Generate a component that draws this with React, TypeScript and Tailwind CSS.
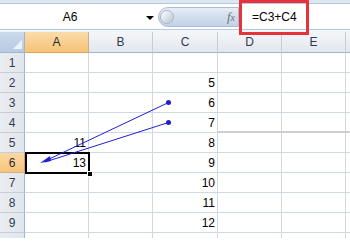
import React from "react";

const cols = ["A", "B", "C", "D", "E", ""];
const colW = [64, 64, 65, 64, 64, 64];
const aVals: Record<number, string> = { 5: "11", 6: "13" };
const cVals: Record<number, string> = { 2: "5", 3: "6", 4: "7", 5: "8", 6: "9", 7: "10", 8: "11", 9: "12" };

function HeaderCell({ label, w, sel }: { label: string; w: number; sel?: boolean }) {
  return (
    <div
      style={{ width: w }}
      className={
        "shrink-0 h-full flex items-center justify-center border-r border-b text-[12px] " +
        (sel
          ? "bg-gradient-to-b from-[#fbdcaa] to-[#f7c275] border-r-[#c7b08a] border-b-[#d9a35a] text-[#2b2b2b]"
          : "bg-gradient-to-b from-[#f4f6f9] to-[#e2e7ee] border-r-[#c5cdd8] border-b-[#9eb6ce] text-[#2f3b4c]")
      }
    >
      {label}
    </div>
  );
}

export default function App() {
  const rows = [1, 2, 3, 4, 5, 6, 7, 8, 9];
  return (
    <div className="relative w-[350px] h-[243px] bg-white overflow-hidden font-['Liberation_Sans',Arial,sans-serif]">
      {/* top strip */}
      <div className="h-[4px] bg-[#dde7f3] border-b border-[#b4c7dd]" />
      {/* formula bar */}
      <div className="h-[25px] flex bg-white">
        <div className="w-[158px] shrink-0 flex items-center relative">
          <div className="w-[140px] text-center text-[12px] text-black">A6</div>
          <div className="absolute left-[146px] top-[12px] w-0 h-0 border-l-[4px] border-r-[4px] border-t-[4px] border-l-transparent border-r-transparent border-t-black" />
        </div>
        <div className="w-[81px] shrink-0 flex items-center">
          <div className="relative w-full h-[20px] rounded-l-full bg-gradient-to-b from-[#e6eef8] via-[#d2deec] to-[#c3d3e6] border border-[#a8bcd4] flex items-center justify-end pr-[3px]">
            <div className="absolute left-[1px] top-[2px] w-[14px] h-[14px] rounded-full bg-gradient-to-br from-white to-[#b9c6d4] border border-[#a8b6c6]" />
            <span className="font-['Liberation_Serif',serif] italic text-[13px] text-[#6d7480]">
              f<span className="text-[10px]">x</span>
            </span>
          </div>
        </div>
        <div className="flex-1 flex items-center pl-[13px] text-[12px] text-black">=C3+C4</div>
      </div>
      <div className="h-[1px] bg-[#b6c8dd]" />
      <div className="h-[2px] bg-[#f2f5f9]" />
      {/* column header */}
      <div className="h-[21px] flex">
        <div className="w-[25px] shrink-0 h-full relative bg-gradient-to-b from-[#cbdaec] to-[#b7cbe3] border-r border-b border-[#9eb6ce]">
          <div
            className="absolute right-[2px] bottom-[3px] w-0 h-0 border-l-transparent border-b-[#eef3f9]"
            style={{ borderLeftWidth: 9, borderBottomWidth: 9, borderTopWidth: 0, borderRightWidth: 0 }}
          />
        </div>
        {cols.map((c, i) => (
          <HeaderCell key={i} label={c} w={colW[i]} sel={i === 0} />
        ))}
      </div>
      {/* rows */}
      {rows.map((r) => (
        <div key={r} className="h-[20px] flex">
          <div
            className={
              "w-[25px] shrink-0 h-full flex items-center justify-center border-r border-b text-[12px] " +
              (r === 6
                ? "bg-gradient-to-b from-[#fbd9a4] to-[#f7c47c] border-r-[#d9a35a] border-b-[#d4b07e] text-[#2b2b2b]"
                : "bg-gradient-to-r from-[#e9edf2] to-[#e1e6ec] border-r-[#9eb6ce] border-b-[#c5cdd8] text-[#2f3b4c]")
            }
          >
            {r}
          </div>
          {cols.map((c, i) => {
            const v = c === "A" ? aVals[r] : c === "C" ? cVals[r] : undefined;
            return (
              <div
                key={i}
                style={{ width: colW[i] }}
                className="shrink-0 h-full border-r border-b border-[#d0d7e5] flex items-center justify-end pr-[2px] text-[12px] text-black"
              >
                {v}
              </div>
            );
          })}
        </div>
      ))}
      {/* partial row 10 */}
      <div className="h-[5px] flex">
        <div className="w-[25px] shrink-0 h-full bg-gradient-to-r from-[#e9edf2] to-[#e1e6ec] border-r border-[#9eb6ce]" />
        {colW.map((w, i) => (
          <div key={i} style={{ width: w }} className="shrink-0 h-full border-r border-[#d0d7e5]" />
        ))}
      </div>
      {/* page break style line */}
      <div className="absolute left-[218px] right-0 top-[131px] h-[2px] bg-[#cfcfcf]" />
      {/* formula highlight box */}
      <div className="absolute left-[239px] top-0 w-[70px] h-[35px] border-[3px] border-[#e5323b]" />
      {/* selection */}
      <div className="absolute left-[25px] top-[152px] w-[65px] h-[22px] border-2 border-black" />
      <div className="absolute left-[87px] top-[171px] w-[6px] h-[6px] bg-black border border-white" />
      {/* tracer arrows */}
      <svg className="absolute left-0 top-0" width="350" height="243">
        <line x1="168.5" y1="102.5" x2="45" y2="161" stroke="#1f1fd6" strokeWidth="1" />
        <line x1="168.5" y1="122.5" x2="45" y2="162" stroke="#1f1fd6" strokeWidth="1" />
        <circle cx="168.5" cy="102.5" r="2.5" fill="#1f1fd6" />
        <circle cx="168.5" cy="122.5" r="2.5" fill="#1f1fd6" />
        <polygon points="40,163 50,156 51,161" fill="#1f1fd6" />
      </svg>
    </div>
  );
}
